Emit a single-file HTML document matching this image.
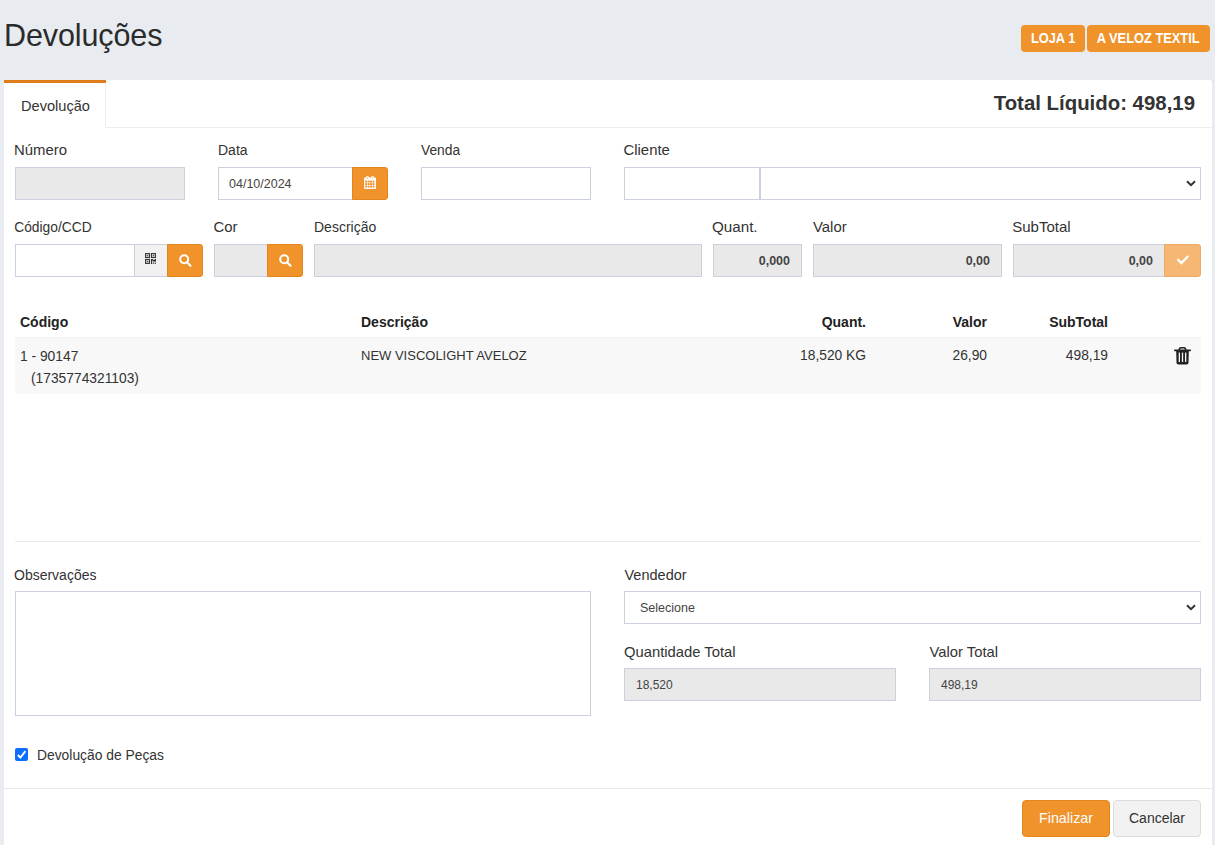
<!DOCTYPE html>
<html><head><meta charset="utf-8">
<style>
*{box-sizing:border-box;margin:0;padding:0}
html,body{width:1215px;height:845px;overflow:hidden}
body{background:#e8ecf1;font-family:"Liberation Sans",sans-serif;color:#333;position:relative}
.a{position:absolute;white-space:nowrap}
.h1{left:4px;top:17px;font-size:30.5px;color:#2b2b2b;line-height:36px;letter-spacing:-0.1px}
.badge{top:25px;height:27px;background:#f0932b;color:#fff;font-weight:bold;font-size:14.5px;line-height:27px;text-align:center;border-radius:4px}
.badge span{display:inline-block;transform:scaleX(.885)}
.card{left:4px;top:80px;width:1208px;height:800px;background:#fff;border-radius:3px}
.tab{left:4px;top:80px;width:102px;height:3px;background:#dd7c1b}
.tabr{left:105px;top:84px;width:1px;height:44px;background:#ededed}
.tabline{left:105px;top:127px;width:1107px;height:1px;background:#ededed}
.tabtxt{left:21px;top:97px;font-size:14.6px;line-height:18px;color:#333}
.total{right:20px;top:91px;font-size:20.4px;line-height:24px;font-weight:bold;color:#333}
.lbl{font-size:14px;color:#333;line-height:18px}
.inp{height:33px;border:1px solid #cbd1dc;background:#fff}
.dis{background:#e9e9e9}
.btno{background:#f0932b;height:33px;border:1px solid #e4861d;border-radius:0 3px 3px 0}
.val{font-size:12.5px;color:#444;line-height:31px}
.vb{font-size:12.5px;font-weight:bold;color:#444;line-height:31px;text-align:right}
.th{font-size:14px;font-weight:bold;color:#222;line-height:18px}
.td{font-size:13.8px;color:#333;line-height:22px}
svg{position:absolute;overflow:visible}
</style></head><body>
<div class="a h1">Devoluções</div>
<div class="a badge" style="left:1021px;width:64px"><span>LOJA 1</span></div>
<div class="a badge" style="left:1087px;width:123px"><span>A VELOZ TEXTIL</span></div>
<div class="a card"></div>
<div class="a tab"></div>
<div class="a tabr"></div>
<div class="a tabline"></div>
<div class="a tabtxt">Devolução</div>
<div class="a total">Total Líquido: 498,19</div>

<!-- row 1 -->
<div class="a lbl" style="left:14px;top:141px;font-size:14.9px">Número</div>
<div class="a inp dis" style="left:15px;top:167px;width:170px"></div>
<div class="a lbl" style="left:218px;top:141px;font-size:14px">Data</div>
<div class="a inp" style="left:218px;top:167px;width:135px"></div>
<div class="a val" style="left:229px;top:169px">04/10/2024</div>
<div class="a btno" style="left:352px;top:167px;width:36px"></div>
<svg style="left:364px;top:176px" width="12" height="13" viewBox="0 0 12 13">
  <rect x="0" y="1.6" width="12" height="11.4" rx="0.8" fill="#fff"/>
  <rect x="2.2" y="0" width="2.6" height="3.6" rx="1.2" fill="#fff"/>
  <rect x="7.2" y="0" width="2.6" height="3.6" rx="1.2" fill="#fff"/>
  <rect x="3.1" y="0.9" width="0.9" height="2" fill="#f0932b" opacity="0.6"/><rect x="8.1" y="0.9" width="0.9" height="2" fill="#f0932b" opacity="0.6"/>
  <g fill="#f0932b"><rect x="1.20" y="4.60" width="1.9" height="1.95"/><rect x="3.65" y="4.60" width="1.9" height="1.95"/><rect x="6.10" y="4.60" width="1.9" height="1.95"/><rect x="8.55" y="4.60" width="1.9" height="1.95"/><rect x="1.20" y="7.10" width="1.9" height="1.95"/><rect x="3.65" y="7.10" width="1.9" height="1.95"/><rect x="6.10" y="7.10" width="1.9" height="1.95"/><rect x="8.55" y="7.10" width="1.9" height="1.95"/><rect x="1.20" y="9.60" width="1.9" height="1.95"/><rect x="3.65" y="9.60" width="1.9" height="1.95"/><rect x="6.10" y="9.60" width="1.9" height="1.95"/><rect x="8.55" y="9.60" width="1.9" height="1.95"/></g>
</svg>
<div class="a lbl" style="left:421px;top:142px;font-size:13.8px">Venda</div>
<div class="a inp" style="left:421px;top:167px;width:170px"></div>
<div class="a lbl" style="left:623.5px;top:141px;font-size:14.9px">Cliente</div>
<div class="a inp" style="left:624px;top:167px;width:136px"></div>
<div class="a inp" style="left:760px;top:167px;width:441px"></div>
<svg style="left:1186px;top:180px" width="10" height="7" viewBox="0 0 10 7"><path d="M1 1.3 L5 5.2 L9 1.3" stroke="#333" stroke-width="2" fill="none"/></svg>

<!-- row 2 -->
<div class="a lbl" style="left:14.2px;top:219px;font-size:13.8px">Código/CCD</div>
<div class="a inp" style="left:15px;top:244px;width:120px"></div>
<div class="a inp" style="left:135px;top:244px;width:33px;background:#f1f1f1;border-left:none"></div>
<svg style="left:145px;top:253px" width="11" height="11" viewBox="0 0 11 11">
  <g fill="none" stroke="#3a3a3a" stroke-width="1.15">
    <rect x="0.6" y="0.6" width="3.9" height="3.9"/><rect x="6.5" y="0.6" width="3.9" height="3.9"/><rect x="0.6" y="6.5" width="3.9" height="3.9"/>
  </g>
  <g fill="#555"><rect x="1.8" y="1.8" width="1.5" height="1.5"/><rect x="7.7" y="1.8" width="1.5" height="1.5"/><rect x="1.8" y="7.7" width="1.5" height="1.5"/></g>
  <g fill="#333"><rect x="6" y="6" width="1.2" height="5"/><rect x="6" y="6" width="2.2" height="1.6"/><rect x="8" y="7" width="3" height="1.6"/><rect x="9.6" y="6" width="1.4" height="1.2"/>
  <rect x="8" y="9.6" width="1.2" height="1.2"/><rect x="9.8" y="9.6" width="1.2" height="1.2"/></g>
</svg>
<div class="a btno" style="left:167px;top:244px;width:36px"></div>
<svg style="left:179px;top:254px" width="13" height="13" viewBox="0 0 13 13"><circle cx="5.2" cy="5.3" r="4" stroke="#fff" stroke-width="2" fill="none"/><path d="M8 8.2 L11.5 11.7" stroke="#fff" stroke-width="2.2" stroke-linecap="round"/></svg>
<div class="a lbl" style="left:213.5px;top:218px;font-size:14.9px">Cor</div>
<div class="a inp dis" style="left:214px;top:244px;width:54px"></div>
<div class="a btno" style="left:267px;top:244px;width:36px"></div>
<svg style="left:279px;top:254px" width="13" height="13" viewBox="0 0 13 13"><circle cx="5.2" cy="5.3" r="4" stroke="#fff" stroke-width="2" fill="none"/><path d="M8 8.2 L11.5 11.7" stroke="#fff" stroke-width="2.2" stroke-linecap="round"/></svg>
<div class="a lbl" style="left:314px;top:218px;font-size:14px">Descrição</div>
<div class="a inp dis" style="left:314px;top:244px;width:388px"></div>
<div class="a lbl" style="left:712px;top:218px;font-size:15.2px">Quant.</div>
<div class="a inp dis" style="left:713px;top:244px;width:89px"></div>
<div class="a vb" style="left:713px;top:246px;width:77px">0,000</div>
<div class="a lbl" style="left:813px;top:218px;font-size:14.9px">Valor</div>
<div class="a inp dis" style="left:813px;top:244px;width:189px"></div>
<div class="a vb" style="left:813px;top:246px;width:177px">0,00</div>
<div class="a lbl" style="left:1012.2px;top:218px;font-size:15px">SubTotal</div>
<div class="a inp dis" style="left:1013px;top:244px;width:152px"></div>
<div class="a vb" style="left:1013px;top:246px;width:140px">0,00</div>
<div class="a" style="left:1164px;top:244px;width:37px;height:33px;background:#f6b774;border:1px solid #ecaa66;border-radius:0 3px 3px 0"></div>
<svg style="left:1176px;top:254px" width="14" height="11" viewBox="0 0 14 11"><path d="M1.5 5.2 L5.3 9 L12.3 2" stroke="#fff" stroke-width="2.4" fill="none"/></svg>

<!-- table -->
<div class="a th" style="left:20px;top:313px">Código</div>
<div class="a th" style="left:361px;top:313px">Descrição</div>
<div class="a th" style="left:766px;top:313px;width:100px;text-align:right">Quant.</div>
<div class="a th" style="left:887px;top:313px;width:100px;text-align:right">Valor</div>
<div class="a th" style="left:1008px;top:313px;width:100px;text-align:right">SubTotal</div>
<div class="a" style="left:15px;top:337px;width:1186px;height:57px;background:#f8f8f8;border-top:1px solid #f0f0f0"></div>
<div class="a td" style="left:20px;top:345.6px">1 - 90147</div>
<div class="a td" style="left:31px;top:367.6px">(1735774321103)</div>
<div class="a td" style="left:361px;top:345px;font-size:13px">NEW VISCOLIGHT AVELOZ</div>
<div class="a td" style="left:766px;top:345px;width:100px;text-align:right">18,520 KG</div>
<div class="a td" style="left:887px;top:345px;width:100px;text-align:right">26,90</div>
<div class="a td" style="left:1008px;top:345px;width:100px;text-align:right">498,19</div>
<svg style="left:1174px;top:347px" width="17" height="18" viewBox="0 0 17 18">
  <path d="M5.2 3 L5.6 1.6 Q6 0.8 7 0.8 L10 0.8 Q11 0.8 11.4 1.6 L11.8 3" stroke="#222" stroke-width="1.6" fill="none"/>
  <rect x="0" y="2.4" width="17" height="1.8" rx="0.8" fill="#222"/>
  <path d="M2.2 4 L14.8 4 L14.5 15.8 Q14.4 17.4 12.8 17.4 L4.2 17.4 Q2.6 17.4 2.5 15.8 Z" fill="#222"/>
  <rect x="4.7" y="5.6" width="1.3" height="9.4" fill="#f8f8f8"/><rect x="7.85" y="5.6" width="1.3" height="9.4" fill="#f8f8f8"/><rect x="11" y="5.6" width="1.3" height="9.4" fill="#f8f8f8"/>
</svg>

<!-- bottom -->
<div class="a" style="left:15px;top:541px;width:1186px;height:1px;background:#eaeaea"></div>
<div class="a lbl" style="left:14px;top:566px;font-size:14px">Observações</div>
<div class="a inp" style="left:15px;top:591px;width:576px;height:125px"></div>
<div class="a lbl" style="left:624.5px;top:566px;font-size:14.5px">Vendedor</div>
<div class="a inp" style="left:624px;top:591px;width:577px"></div>
<div class="a val" style="left:640px;top:592.6px;font-size:12.5px">Selecione</div>
<svg style="left:1186px;top:604px" width="10" height="7" viewBox="0 0 10 7"><path d="M1 1.3 L5 5.2 L9 1.3" stroke="#333" stroke-width="2" fill="none"/></svg>
<div class="a lbl" style="left:624px;top:643px;font-size:14.8px">Quantidade Total</div>
<div class="a inp dis" style="left:624px;top:668px;width:272px"></div>
<div class="a val" style="left:636px;top:670px;font-size:12px">18,520</div>
<div class="a lbl" style="left:929.5px;top:643px;font-size:14.8px">Valor Total</div>
<div class="a inp dis" style="left:929px;top:668px;width:272px"></div>
<div class="a val" style="left:941px;top:670px;font-size:12px">498,19</div>
<div class="a" style="left:15px;top:748px;width:13px;height:13px;background:#0d6efd;border-radius:2px"></div>
<svg style="left:15px;top:748px" width="13" height="13" viewBox="0 0 13 13"><path d="M2.8 7 L5.4 9.6 L10.4 3.2" stroke="#fff" stroke-width="1.9" fill="none"/></svg>
<div class="a lbl" style="left:37px;top:746px;font-size:13.85px">Devolução de Peças</div>
<div class="a" style="left:4px;top:788px;width:1208px;height:1px;background:#eaeaea"></div>
<div class="a" style="left:1022px;top:800px;width:88px;height:37px;background:#f0932b;border:1px solid #e4861d;border-radius:4px;color:#fff;font-size:14.3px;line-height:35px;text-align:center">Finalizar</div>
<div class="a" style="left:1113px;top:800px;width:88px;height:37px;background:#f2f2f2;border:1px solid #dcdcdc;border-radius:4px;color:#333;font-size:14px;line-height:35px;text-align:center">Cancelar</div>
</body></html>
